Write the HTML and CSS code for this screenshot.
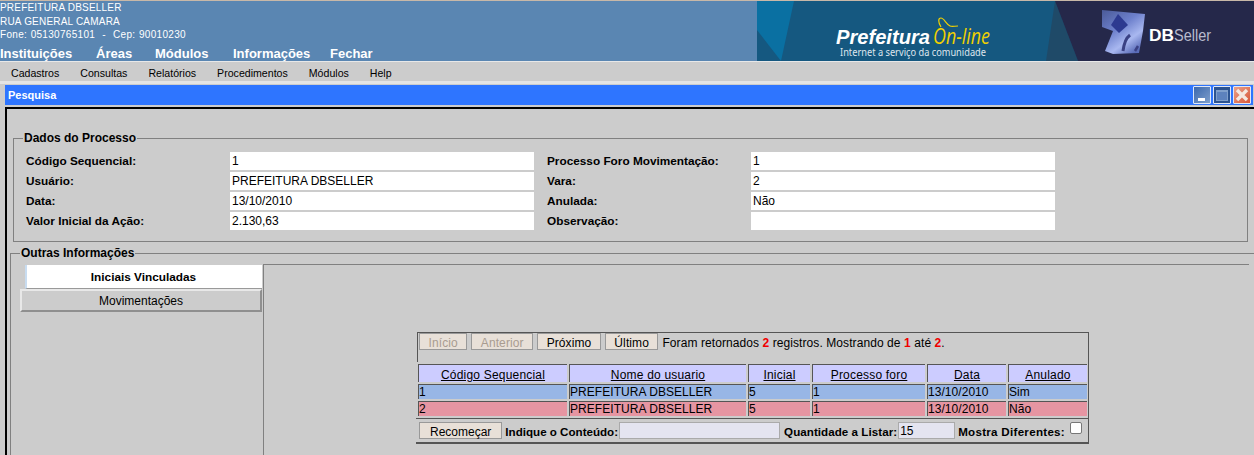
FILE: index.html
```html
<!DOCTYPE html>
<html lang="pt-BR"><head><meta charset="UTF-8">
  <title>Pesquisa</title>
  <link rel="stylesheet" href="styles.css">
</head>
<body>
  <div class="topo">
    <div class="topo-info">
      <div class="endereco">
        <div>PREFEITURA DBSELLER</div>
        <div>RUA GENERAL CAMARA</div>
        <div class="fone">Fone: 05130765101 &nbsp;-&nbsp; Cep: 90010230</div>
      </div>
      <div class="menu-topo">
        <span class="m1">Instituições</span>
        <span class="m2">Áreas</span>
        <span class="m3">Módulos</span>
        <span class="m4">Informações</span>
        <span class="m5">Fechar</span>
      </div>
    </div>
    <svg class="banner" width="497" height="60" viewBox="0 0 497 60">
      <defs>
        <linearGradient id="cubo" x1="0" y1="0" x2="0.7" y2="1">
          <stop offset="0" stop-color="#4a5a98"/>
          <stop offset="0.45" stop-color="#6d80cc"/>
          <stop offset="0.75" stop-color="#a9b8f0"/>
          <stop offset="1" stop-color="#5a6cb8"/>
        </linearGradient>
      </defs>
      <rect width="497" height="60" fill="#155880"/>
      <polygon points="0,0 37,0 24,60 0,29" fill="#0a70a2"/>
      <polygon points="298,0 321,60 289,60" fill="#1f4a68"/>
      <polygon points="298,0 497,0 497,60 321,60" fill="#25284a"/>
      <text class="lg-pref" x="79" y="43" textLength="94" lengthAdjust="spacingAndGlyphs">Prefeitura</text>
      <text class="lg-on" x="176" y="43" textLength="57" lengthAdjust="spacingAndGlyphs">On-line</text>
      <path d="M184 26c-3-5-3-9 0-9 3 0 5 6 9 8 2 1 5 0 8 0" fill="none" stroke="#f0d000" stroke-width="1.2"/>
      <text class="lg-sub" x="83" y="55" textLength="146" lengthAdjust="spacingAndGlyphs">Internet a serviço da comunidade</text>
      <path d="M345 9L388 13 386 30 382 52 356 53 348 50 356 30 345 26Z" fill="url(#cubo)"/>
      <path d="M361 13L371 24 362 32 354 24Z" fill="#2d3a90"/>
      <path d="M366 50C367 42 369 37 373 34" fill="none" stroke="#3a4184" stroke-width="3"/>
      <path d="M378 50L381 45" fill="none" stroke="#3a4184" stroke-width="2.5"/>
      <text class="lg-db" x="392" y="40" textLength="25" lengthAdjust="spacingAndGlyphs">DB</text>
      <text class="lg-seller" x="417" y="40" textLength="37" lengthAdjust="spacingAndGlyphs">Seller</text>
    </svg>
  </div>

  <div class="menu-barra">
    <span>Cadastros</span>
    <span>Consultas</span>
    <span>Relatórios</span>
    <span>Procedimentos</span>
    <span>Módulos</span>
    <span>Help</span>
  </div>

  <div class="janela">
    <div class="titulo">
      <span>Pesquisa</span>
      <div class="botoes">
        <span class="btn-jan min"><i></i></span>
        <span class="btn-jan max"><i></i></span>
        <span class="btn-jan fechar">
          <svg width="14" height="14" viewBox="0 0 14 14"><path d="M2 2l10 10M12 2L2 12" stroke="#f4e8e0" stroke-width="3.4"/></svg>
        </span>
      </div>
    </div>
    <div class="conteudo">
      <fieldset class="dados">
        <legend>Dados do Processo</legend>
        <div class="grade">
          <label>Código Sequencial:</label><div class="campo">1</div>
          <label>Processo Foro Movimentação:</label><div class="campo">1</div>
          <label>Usuário:</label><div class="campo">PREFEITURA DBSELLER</div>
          <label>Vara:</label><div class="campo">2</div>
          <label>Data:</label><div class="campo">13/10/2010</div>
          <label>Anulada:</label><div class="campo">Não</div>
          <label>Valor Inicial da Ação:</label><div class="campo">2.130,63</div>
          <label>Observação:</label><div class="campo"></div>
        </div>
      </fieldset>

      <fieldset class="outras">
        <legend>Outras Informações</legend>
        <div class="abas-area">
          <div class="abas">
            <div class="aba ativa">Iniciais Vinculadas</div>
            <div class="aba">Movimentações</div>
          </div>
          <div class="painel">
            <div class="lista">
              <div class="navega">
                <button class="off">Início</button>
                <button class="off">Anterior</button>
                <button>Próximo</button>
                <button>Último</button>
                <span>Foram retornados <b>2</b> registros. Mostrando de <b>1</b> até <b>2</b>.</span>
              </div>
              <table>
                <tr>
                  <th class="c1">Código Sequencial</th>
                  <th class="c2">Nome do usuario</th>
                  <th class="c3">Inicial</th>
                  <th class="c4">Processo foro</th>
                  <th class="c5">Data</th>
                  <th class="c6">Anulado</th>
                </tr>
                <tr class="azul-lin">
                  <td>1</td><td>PREFEITURA DBSELLER</td><td>5</td><td>1</td><td>13/10/2010</td><td>Sim</td>
                </tr>
                <tr class="rosa-lin">
                  <td>2</td><td>PREFEITURA DBSELLER</td><td>5</td><td>1</td><td>13/10/2010</td><td>Não</td>
                </tr>
              </table>
              <div class="rodape">
                <button>Recomeçar</button>
                <strong>Indique o Conteúdo:</strong><span class="entrada e1"></span>
                <strong class="qtd">Quantidade a Listar:</strong><span class="entrada e2">15</span>
                <strong class="dif">Mostra Diferentes:</strong><span class="check"></span>
              </div>
            </div>
          </div>
        </div>
      </fieldset>
    </div>
  </div>
</body></html>
```

FILE: styles.css
```css
html, body { margin: 0; padding: 0; height: 455px; overflow: hidden; }
body { background: #cccccc; font-family: "Liberation Sans", Arial, sans-serif; font-size: 12px; color: #000; }

.topo { display: flex; height: 60px; background: #5a86b2; border-top: 1px solid #c8b8a8; border-bottom: 1px solid #e8e8e8; }
.topo-info { flex: 1; color: #fff; display: flex; flex-direction: column; }
.endereco { font-size: 10px; line-height: 13.5px; letter-spacing: 0.2px; height: 45px; }
.fone { letter-spacing: 0.3px; word-spacing: 0.5px; }
.menu-topo { display: flex; font-size: 13px; font-weight: bold; line-height: 15px; }
.menu-topo .m1 { width: 96px; }
.menu-topo .m2 { width: 59px; }
.menu-topo .m3 { width: 78px; }
.menu-topo .m4 { width: 97px; }
.banner { display: block; flex: none; }
.lg-pref { font: italic bold 20px "Liberation Sans", sans-serif; fill: #fff; }
.lg-on { font: italic 21px "Open Sans", sans-serif; fill: #f0d000; }
.lg-sub { font: 10px "Noto Sans", sans-serif; fill: #dfe6ee; }
.lg-db { font: bold 17px "Liberation Sans", sans-serif; fill: #fff; }
.lg-seller { font: 17px "Liberation Sans", sans-serif; fill: #b8bacd; }

.menu-barra { display: flex; height: 19px; padding-left: 1px; line-height: 23px; border-bottom: 3px solid #e4e4e4; font-size: 10.6px; }
.menu-barra span { padding: 0 10px; margin-right: 1px; }

.janela { margin-left: 5px; }
.titulo { height: 20px; background: #2e75ff; color: #fff; font-weight: bold; font-size: 11px; line-height: 21px; padding-left: 3px; display: flex; justify-content: space-between; margin-top: 1px; margin-right: 1px; }
.botoes { display: flex; gap: 2px; padding: 1px 2px 0 0; }
.btn-jan { width: 16px; height: 16px; border: 1px solid #dfe8f8; border-radius: 1px; position: relative; display: flex; align-items: center; justify-content: center; }
.min { background: linear-gradient(135deg, #3b68ad, #7f9fcb); }
.min i { width: 7px; height: 3px; background: #fff; position: absolute; left: 4px; bottom: 2px; }
.max { background: #2c5390; }
.max i { width: 10px; height: 8px; background: #5d82bd; border: 1px solid #7f9fcb; border-top-width: 2px; }
.fechar { background: linear-gradient(135deg, #e9a088, #d8583a); }

.conteudo { margin-top: 2px; border-top: 2px solid #000; border-left: 2px solid #000; padding: 23px 0 0 3px; box-sizing: border-box; height: 348px; }
fieldset { margin: 0; border: 1px solid #808080; }
legend { font-weight: bold; font-size: 12px; padding: 0 1px; line-height: 13px; }
.dados { margin: 0 6px 0 3px; padding: 7px 0 0 12px; height: 110px; box-sizing: border-box; }
.dados legend { margin-left: -3px; }
.grade { display: grid; grid-template-columns: 204px 304px 217px 304px; grid-auto-rows: 18px; row-gap: 2px; align-items: center; }
.grade label { font-weight: bold; font-size: 11.8px; }
.grade label:nth-of-type(even) { padding-left: 13px; }
.campo { background: #fff; height: 18px; line-height: 19px; padding-left: 2px; box-sizing: border-box; }

.outras { margin: 5px 0 0 0; padding: 4px 0 0 9px; height: 230px; box-sizing: border-box; border-right: 0; border-bottom: 0; }
.outras legend { margin-left: 0; }
.abas-area { display: flex; }
.abas { width: 243px; flex: none; }
.aba { height: 23px; line-height: 20px; text-align: center; box-sizing: border-box; background: #cccccc; border: 2px solid; border-color: #e8e8e8 #8f8f8f #8f8f8f #e8e8e8; width: 242px; }
.aba.ativa { background: #fff; font-weight: bold; font-size: 11.8px; line-height: 24px; padding-right: 2px; margin-left: 5px; width: 237px; border: 0; border-left: 2px solid #c8dcf0; height: 24px; margin-top: 1px; border-bottom: 1px solid #999; }
.painel { flex: 1; height: 200px; margin-right: 5px; border: 1px solid #808080; border-width: 1px 0 0 1px; padding: 67px 0 0 153px; box-sizing: border-box; }

.lista { width: 672px; height: 112px; border: 1px solid #555; border-width: 1px 1px 0 0; box-sizing: border-box; }
.navega { height: 29px; padding: 0 0 0 1px; display: flex; align-items: flex-start; gap: 4px; border-left: 1px solid #555; box-sizing: border-box; }
button { font: inherit; height: 17px; padding: 3px 8.5px 0; background: #e8e0d8; border: 1px solid #999; border-radius: 0; color: #000; line-height: 12px; letter-spacing: 0.1px; }
button.off { color: #a89c90; }
.navega span { line-height: 21px; letter-spacing: 0.08px; }
.navega b { color: #f00000; }
table { border-collapse: separate; border-spacing: 2px; margin: 0 0 0 -1px; width: 673px; table-layout: fixed; letter-spacing: 0.05px; }
th { background: #ccccff; font-weight: normal; text-decoration: underline; height: 18px; padding: 2px 0 0; border-top: 1px solid #555; border-left: 1px solid #555; box-sizing: border-box; letter-spacing: 0.2px; }
td { padding: 0; height: 15px; line-height: 14px; border-top: 1px solid #555; border-left: 1px solid #555; box-sizing: border-box; overflow: hidden; }
.azul-lin td { background: #98b6e6; }
.rosa-lin td { background: #e695a2; }
.c1 { width: 149px; } .c2 { width: 177px; } .c3 { width: 62px; } .c4 { width: 113px; } .c5 { width: 79px; }
.rodape { display: flex; align-items: center; height: 26px; border-top: 1px solid #555; border-bottom: 2px solid #555; padding-left: 3px; box-sizing: border-box; margin-left: -1px; }
.rodape strong { font-size: 11.6px; padding-top: 2px; }
.rodape button { margin-right: 3px; padding: 3px 10px 0; letter-spacing: 0; }
.entrada { height: 17px; background: #e4e4f0; border: 1px solid #aaa; box-sizing: border-box; line-height: 17px; padding-left: 1px; }
.e1 { width: 161px; margin-left: 1px; }
.e2 { width: 57px; margin-left: 1px; }
.qtd { margin-left: 4px; letter-spacing: 0.05px; }
.rodape .dif { margin-left: 3px; letter-spacing: 0.28px; }
.check { width: 12px; height: 12px; background: #fff; border: 1px solid #777; border-radius: 2px; margin: -5px 0 0 5px; box-sizing: border-box; }
```
